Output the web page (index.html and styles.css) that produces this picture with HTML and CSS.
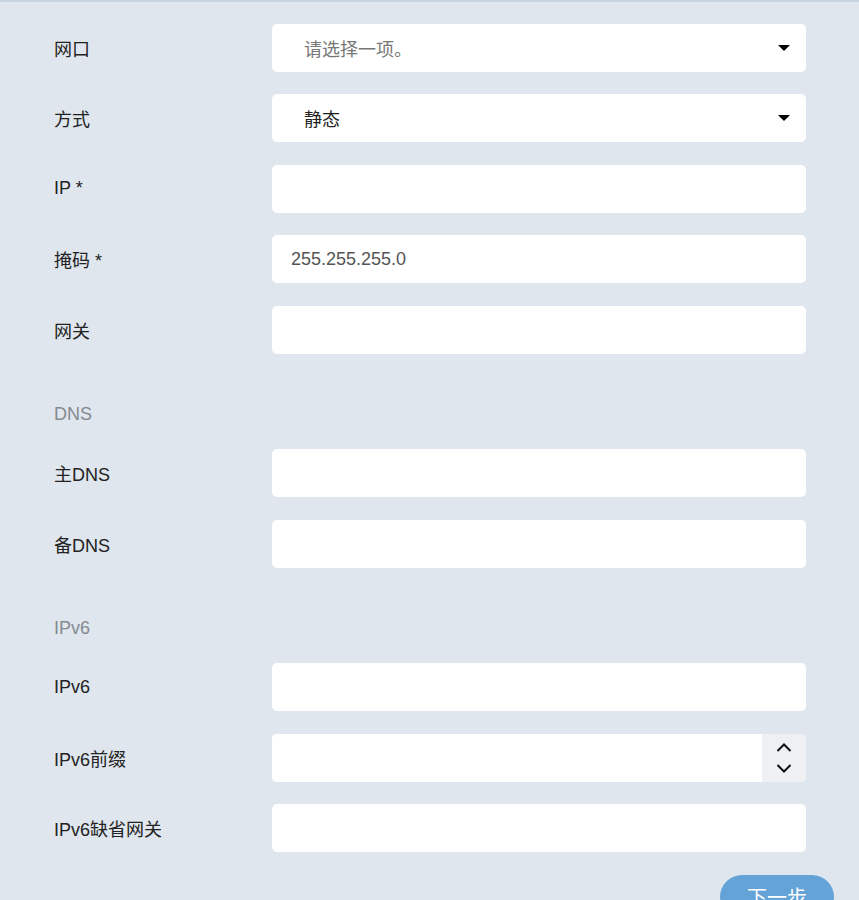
FILE: index.html
```html
<!DOCTYPE html>
<html>
<head>
    <title>网络设置</title>
    <link rel="stylesheet" href="styles.css">
</head>
<body>
    <div class="page">
        <form class="net-form">
            <div class="row">
                <label>网口</label>
                <div class="select">
                    <span class="placeholder">请选择一项。</span>
                    <span class="caret"></span>
                </div>
            </div>
            <div class="row">
                <label>方式</label>
                <div class="select">
                    <span class="value">静态</span>
                    <span class="caret"></span>
                </div>
            </div>
            <div class="row">
                <label>IP *</label>
                <input type="text">
            </div>
            <div class="row">
                <label>掩码 *</label>
                <input type="text" value="255.255.255.0">
            </div>
            <div class="row">
                <label>网关</label>
                <input type="text">
            </div>

            <div class="section-title">DNS</div>
            <div class="row">
                <label>主DNS</label>
                <input type="text">
            </div>
            <div class="row">
                <label>备DNS</label>
                <input type="text">
            </div>

            <div class="section-title">IPv6</div>
            <div class="row">
                <label>IPv6</label>
                <input type="text">
            </div>
            <div class="row">
                <label>IPv6前缀</label>
                <div class="number">
                    <input type="text">
                    <div class="spin">
                        <svg viewBox="0 0 16 9" class="chev"><path d="M1.5 8 L8 1.5 L14.5 8" /></svg>
                        <svg viewBox="0 0 16 9" class="chev"><path d="M1.5 1 L8 7.5 L14.5 1" /></svg>
                    </div>
                </div>
            </div>
            <div class="row">
                <label>IPv6缺省网关</label>
                <input type="text">
            </div>

            <div class="actions">
                <button type="button">下一步</button>
            </div>
        </form>
    </div>
</body>
</html>
```

FILE: styles.css
```css
* {
    margin: 0;
    padding: 0;
    box-sizing: border-box;
    font-family: 'Liberation Sans', Arial, 'Noto Sans CJK SC', sans-serif;
}

body {
    background: #dfe6ee;
    color: #222;
    overflow: hidden;
}

.page {
    border-top: 2px solid #c8d4e0;
    padding: 21.5px 53px 0 54px;
}

.net-form {
    display: flex;
    flex-direction: column;
    gap: 22.5px;
}

.row {
    display: grid;
    grid-template-columns: 218px 1fr;
    align-items: center;
    height: 48px;
}

.row label {
    font-size: 18px;
    color: #222;
}

input {
    width: 100%;
    height: 48px;
    border: none;
    border-radius: 5px;
    background: white;
    padding: 0 19px;
    font-size: 18px;
    color: #555;
    outline: none;
}

.select {
    height: 48px;
    background: white;
    border-radius: 5px;
    display: flex;
    align-items: center;
    justify-content: space-between;
    padding: 0 16px 0 32px;
    font-size: 18px;
}

.placeholder {
    color: #777;
}

.value {
    color: #222;
}

.caret {
    width: 0;
    height: 0;
    border-left: 6px solid transparent;
    border-right: 6px solid transparent;
    border-top: 6px solid #000;
}

.section-title {
    font-size: 18px;
    color: #858a90;
    line-height: 26px;
    padding-top: 24.5px;
}

.number {
    display: flex;
    height: 48px;
    background: white;
    border-radius: 5px;
    overflow: hidden;
}

.number input {
    flex: 1;
    border-radius: 0;
}

.spin {
    width: 44px;
    background: #eef0f4;
    display: flex;
    flex-direction: column;
    align-items: center;
    justify-content: center;
    gap: 12px;
}

.chev {
    width: 16px;
    height: 9px;
    fill: none;
    stroke: #111;
    stroke-width: 2;
}

.actions {
    display: flex;
    justify-content: flex-end;
    margin-right: -28px;
}

button {
    width: 114px;
    height: 44px;
    border: none;
    border-radius: 22px;
    background: #64a3d8;
    color: white;
    font-size: 20px;
    cursor: pointer;
}
```
